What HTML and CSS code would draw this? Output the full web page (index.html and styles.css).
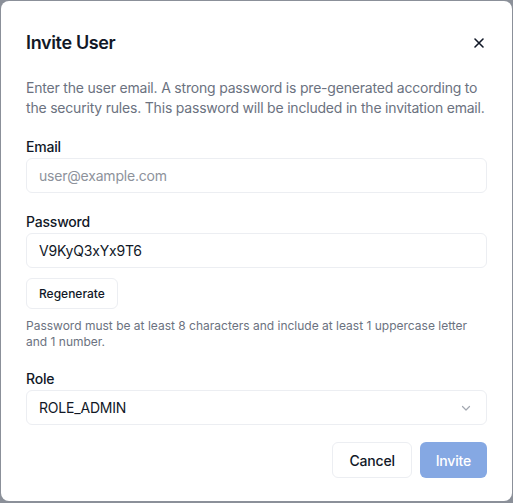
FILE: index.html
```html
<!DOCTYPE html>
<html lang="en">
<head>
    <meta charset="UTF-8">
    <meta name="viewport" content="width=device-width, initial-scale=1.0">
    <title>Invite User</title>
    <link rel="stylesheet" href="styles.css">
</head>
<body>
    <div class="dialog">
        <div class="dialog-header">
            <h2 class="dialog-title">Invite User</h2>
            <button class="close-btn" aria-label="Close">
                <svg width="14" height="14" viewBox="0 0 14 14" fill="none" stroke="#111827" stroke-width="1.6" stroke-linecap="round">
                    <path d="M3 3l8 8M11 3l-8 8"/>
                </svg>
            </button>
        </div>

        <p class="dialog-desc">Enter the user email. A strong password is pre-generated according to the security rules. This password will be included in the invitation email.</p>

        <div class="field">
            <label class="field-label" for="email">Email</label>
            <input id="email" class="field-input" placeholder="user@example.com">
        </div>

        <div class="field">
            <label class="field-label" for="password">Password</label>
            <input id="password" class="field-input" value="V9KyQ3xYx9T6">
            <button class="regen-btn">Regenerate</button>
            <p class="field-hint">Password must be at least 8 characters and include at least 1 uppercase letter and 1 number.</p>
        </div>

        <div class="field">
            <label class="field-label" for="role">Role</label>
            <div class="select">
                <span>ROLE_ADMIN</span>
                <svg width="12" height="12" viewBox="0 0 12 12" fill="none" stroke="#a3a8b1" stroke-width="1.2" stroke-linecap="round" stroke-linejoin="round">
                    <path d="M2.5 4.5L6 8l3.5-3.5"/>
                </svg>
            </div>
        </div>

        <div class="dialog-footer">
            <button class="cancel-btn">Cancel</button>
            <button class="invite-btn">Invite</button>
        </div>
    </div>
</body>
</html>
```

FILE: styles.css
```css
body {
    margin: 0;
    background-color: #8b9099;
    font-family: Inter, "Noto Sans", sans-serif;
    color: #111827;
}

.dialog {
    box-sizing: border-box;
    margin: 1px;
    width: 511px;
    height: 500px;
    padding: 28px 25px 24px 25px;
    background-color: white;
    border-radius: 8px;
}

.dialog-header {
    display: flex;
    align-items: center;
    justify-content: space-between;
}

.dialog-title {
    margin: 0;
    font-size: 18px;
    line-height: 28px;
    font-weight: 600;
    letter-spacing: -0.35px;
}

.close-btn {
    display: flex;
    padding: 0;
    margin-right: 1px;
    border: none;
    background: none;
    cursor: pointer;
}

.dialog-desc {
    margin: 21px 0 0 0;
    font-size: 14px;
    line-height: 20px;
    letter-spacing: -0.2px;
    color: #6b7280;
}

.field {
    display: flex;
    flex-direction: column;
    align-items: flex-start;
    margin-top: 19px;
}

.field-label {
    font-size: 14px;
    line-height: 20px;
    font-weight: 500;
    letter-spacing: -0.2px;
    margin-bottom: 1px;
}

.field-input,
.select {
    box-sizing: border-box;
    width: 100%;
    height: 35px;
    padding: 0 12px;
    border: 1px solid #eceef2;
    border-radius: 6px;
    font-family: inherit;
    font-size: 14px;
    letter-spacing: -0.2px;
    color: #111827;
    outline: none;
}

.field-input::placeholder {
    color: #8d929b;
}

.select {
    display: flex;
    align-items: center;
    justify-content: space-between;
}

.select svg {
    margin-right: 2px;
}

.regen-btn {
    margin-top: 10px;
    height: 31px;
    padding: 0 12px;
    border: 1px solid #eceef2;
    border-radius: 6px;
    background: white;
    font-family: inherit;
    font-size: 12px;
    font-weight: 500;
    color: #111827;
    cursor: pointer;
}

.field-hint {
    margin: 9px 0 0 0;
    font-size: 12px;
    line-height: 16px;
    color: #6b7280;
}

.dialog-footer {
    display: flex;
    justify-content: flex-end;
    gap: 8px;
    margin-top: 17px;
}

.cancel-btn,
.invite-btn {
    height: 36px;
    padding: 0 16px;
    border-radius: 6px;
    font-family: inherit;
    font-size: 14px;
    font-weight: 500;
    letter-spacing: -0.2px;
    cursor: pointer;
}

.cancel-btn {
    border: 1px solid #eceef2;
    background: white;
    color: #111827;
}

.invite-btn {
    border: none;
    background-color: #85a8e3;
    color: white;
}
```
